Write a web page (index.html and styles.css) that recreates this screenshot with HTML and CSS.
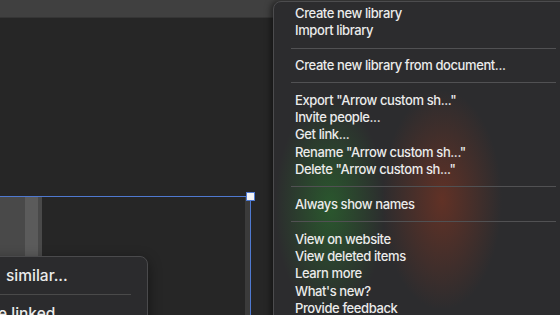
FILE: index.html
```html
<!DOCTYPE html>
<html lang="en">
<head>
    <meta charset="UTF-8">
    <meta name="viewport" content="width=device-width, initial-scale=1.0">
    <title>Library menu</title>
    <link rel="stylesheet" href="styles.css">
</head>
<body>
    <div class="app">
        <div class="toolbar"></div>
        <div class="canvas">
            <!-- selected frame on the canvas -->
            <div class="frame">
                <div class="frame-edge"></div>
                <div class="frame-block"><div class="frame-strip"></div></div>
                <div class="handle"></div>
            </div>

            <!-- context menu, cut off at the left edge -->
            <div class="ctx-menu">
                <div class="ctx-item first">similar...</div>
                <div class="sep"></div>
                <div class="ctx-item second">e linked</div>
            </div>
        </div>

        <!-- library menu -->
        <div class="lib-menu">
            <div class="glow"></div>
            <ul class="menu-list">
                <li>Create new library</li>
                <li>Import library</li>
                <li class="sep"></li>
                <li>Create new library from document...</li>
                <li class="sep"></li>
                <li>Export "Arrow custom sh..."</li>
                <li>Invite people...</li>
                <li>Get link...</li>
                <li>Rename "Arrow custom sh..."</li>
                <li>Delete "Arrow custom sh..."</li>
                <li class="sep"></li>
                <li>Always show names</li>
                <li class="sep"></li>
                <li>View on website</li>
                <li>View deleted items</li>
                <li>Learn more</li>
                <li>What's new?</li>
                <li>Provide feedback</li>
            </ul>
        </div>
    </div>
</body>
</html>
```

FILE: styles.css
```css
* {
    margin: 0;
    padding: 0;
    box-sizing: border-box;
}

body {
    background-color: #262626;
    font-family: 'Inter', 'Noto Sans', sans-serif;
    color: #ebebeb;
    overflow: hidden;
}

.app {
    position: relative;
    width: 560px;
    height: 315px;
    overflow: hidden;
}

.toolbar {
    height: 18px;
    background: #404040;
    border-bottom: 1px solid #353535;
}

.canvas {
    position: relative;
    height: 297px;
    background: #262626;
}

.frame {
    position: absolute;
    left: -10px;
    top: 178px;
    width: 261px;
    height: 140px;
    border-top: 1px solid #4f79d0;
    border-right: 1px solid #4f79d0;
}

.frame-edge {
    position: absolute;
    right: 0;
    top: 0;
    width: 5px;
    height: 100%;
    background: #3b3b3b;
}

.frame-block {
    position: absolute;
    left: 0;
    top: 0;
    width: 52px;
    height: 62px;
    background: #494949;
}

.frame-strip {
    position: absolute;
    left: 35px;
    top: 0;
    width: 13px;
    height: 100%;
    background: #5b5b5b;
}

.handle {
    position: absolute;
    right: -5px;
    top: -5px;
    width: 9px;
    height: 9px;
    background: #f4f4f4;
    border: 1px solid #4f79d0;
}

.ctx-menu {
    position: absolute;
    left: -20px;
    top: 238px;
    width: 168px;
    height: 80px;
    background: #2b2b2d;
    border: 1px solid #4a4a4c;
    border-radius: 8px;
    box-shadow: 0 4px 14px rgba(0, 0, 0, 0.45);
    padding-top: 9px;
    font-size: 15.5px;
    font-weight: 500;
}

.ctx-item {
    line-height: 19px;
}

.ctx-item.first {
    padding-left: 25px;
}

.ctx-item.second {
    padding-left: 17px;
    margin-top: 3px;
}

.ctx-menu .sep {
    height: 1px;
    background: #4a4a4a;
    margin: 9px 16px 9px 0;
}

.lib-menu {
    position: absolute;
    left: 273px;
    top: 1px;
    width: 300px;
    height: 330px;
    background: #2c2c2e;
    border: 1px solid #4c4c4e;
    border-radius: 8px;
    box-shadow: -2px 0 6px rgba(0, 0, 0, 0.5);
    overflow: hidden;
}

.glow {
    position: absolute;
    inset: 0;
    background:
        radial-gradient(ellipse 55px 110px at 56px 205px, rgba(40, 130, 45, 0.5), transparent),
        radial-gradient(ellipse 60px 110px at 168px 198px, rgba(150, 55, 30, 0.5), transparent);
}

.menu-list {
    position: relative;
    list-style: none;
    padding: 3px 16px 0 21px;
    font-size: 13px;
    font-weight: 500;
    letter-spacing: -0.4px;
}

.menu-list li {
    line-height: 17.3px;
    white-space: nowrap;
}

.menu-list li.sep {
    height: 1px;
    background: #515153;
    margin: 8px 0 8.5px -4px;
}
```
